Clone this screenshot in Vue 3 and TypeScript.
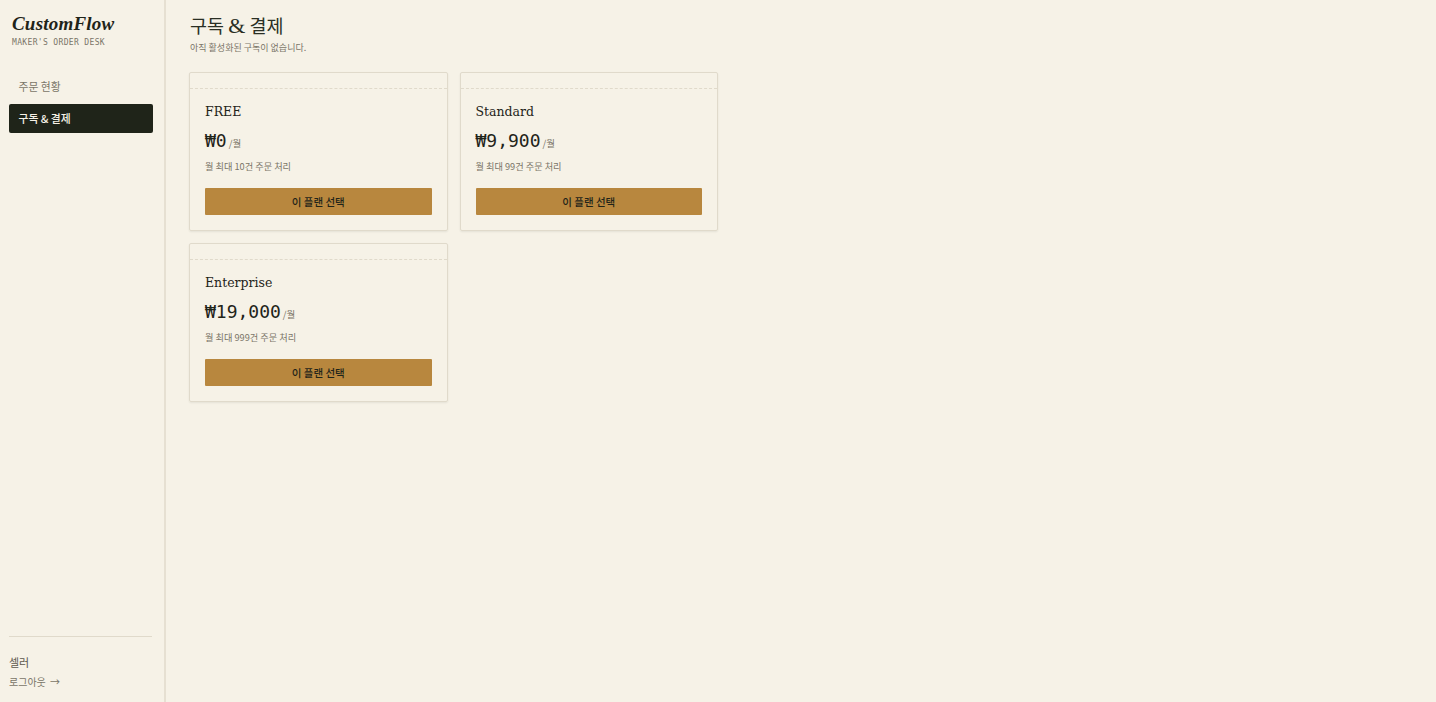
<script setup lang="ts">
const plans = [
  { name: 'FREE', price: '₩0', limit: '월 최대 10건 주문 처리' },
  { name: 'Standard', price: '₩9,900', limit: '월 최대 99건 주문 처리' },
  { name: 'Enterprise', price: '₩19,000', limit: '월 최대 999건 주문 처리' },
]
</script>

<template>
  <div class="layout">
    <aside class="sidebar">
      <div class="brand">
        <div class="brand__name">CustomFlow</div>
        <div class="brand__tag">MAKER'S ORDER DESK</div>
      </div>
      <nav class="nav">
        <a class="nav__item">주문 현황</a>
        <a class="nav__item nav__item--active">구독 &amp; 결제</a>
      </nav>
      <div class="user">
        <div class="user__name">셀러</div>
        <a class="user__logout">로그아웃 <span class="user__arrow">→</span></a>
      </div>
    </aside>
    <main class="main">
      <h1 class="title">구독 <span class="title__amp">&amp;</span> 결제</h1>
      <p class="subtitle">아직 활성화된 구독이 없습니다.</p>
      <div class="plans">
        <section v-for="plan in plans" :key="plan.name" class="plan">
          <h2 class="plan__name">{{ plan.name }}</h2>
          <div class="plan__price">
            <span class="plan__amount">{{ plan.price }}</span>
            <span class="plan__per">/월</span>
          </div>
          <p class="plan__limit">{{ plan.limit }}</p>
          <button class="plan__btn">이 플랜 선택</button>
        </section>
      </div>
    </main>
  </div>
</template>

<style>
body {
  background: #f6f2e7;
}
</style>

<style scoped>
.layout {
  display: flex;
  height: 702px;
  font-family: "Noto Sans CJK KR", "Noto Sans", sans-serif;
  color: #1f2419;
  background: #f6f2e7;
}

.sidebar {
  width: 166px;
  box-sizing: border-box;
  border-right: 2px solid #e6e0d2;
  padding: 0 11px 0 9px;
  display: flex;
  flex-direction: column;
}

.brand {
  padding: 12px 3px 0;
}

.brand__name {
  font-family: "Liberation Serif", serif;
  font-style: italic;
  font-weight: 700;
  font-size: 19px;
  line-height: 23px;
  letter-spacing: 0.2px;
}

.brand__tag {
  font-family: "DejaVu Sans Mono", monospace;
  font-size: 8px;
  line-height: 11px;
  letter-spacing: 0.35px;
  color: #7a7568;
  margin-top: 2px;
}

.nav {
  margin-top: 24px;
  display: flex;
  flex-direction: column;
  gap: 3px;
}

.nav__item {
  height: 29px;
  line-height: 29px;
  padding-left: 9.5px;
  font-size: 10.8px;
  color: #7a7568;
  border-radius: 2px;
}

.nav__item--active {
  background: #1f2419;
  color: #f6f2e7;
  font-weight: 500;
}

.user {
  margin-top: auto;
  margin-right: 1px;
  border-top: 1px solid #e0dacb;
  padding: 17px 0 12px;
}

.user__name {
  font-size: 11px;
  line-height: 16px;
  color: #5c584d;
}

.user__logout {
  display: block;
  margin-top: 4px;
  font-size: 10px;
  line-height: 16px;
  color: #7a7568;
}

.user__arrow {
  margin-left: 2px;
}

.main {
  flex: 1;
  padding: 12px 24px;
}

.title {
  margin: 0;
  font-family: "Noto Sans CJK KR", serif;
  font-weight: 400;
  font-size: 18.5px;
  line-height: 26px;
  color: #2a2f24;
}

.title__amp {
  font-family: "Liberation Serif", serif;
  font-size: 22px;
}

.subtitle {
  margin: 2px 0 0;
  font-size: 9px;
  line-height: 14px;
  color: #7a7568;
}

.plans {
  margin-top: 17px;
  margin-left: -1px;
  display: grid;
  grid-template-columns: repeat(2, 258.5px);
  gap: 12px;
}

.plan {
  position: relative;
  box-sizing: border-box;
  height: 159px;
  padding: 29px 15px 0;
  border: 1px solid #e0dacb;
  border-radius: 2px;
  box-shadow: 0 1px 2px rgba(31, 36, 25, 0.08);
}

.plan::before {
  content: '';
  position: absolute;
  top: 15px;
  left: 0;
  right: 0;
  border-top: 1px dashed #e0dacb;
}

.plan__name {
  margin: 0;
  font-family: "DejaVu Serif", serif;
  font-weight: 400;
  font-size: 12.5px;
  line-height: 19px;
}

.plan__price {
  margin-top: 8px;
  display: flex;
  align-items: baseline;
  gap: 2px;
  height: 24px;
}

.plan__amount {
  font-family: "DejaVu Sans Mono", monospace;
  font-size: 18px;
  line-height: 24px;
}

.plan__per {
  font-size: 9.5px;
  color: #7a7568;
}

.plan__limit {
  margin: 6px 0 0;
  font-size: 9.2px;
  line-height: 14px;
  color: #7a7568;
}

.plan__btn {
  display: block;
  width: 100%;
  height: 27px;
  margin-top: 15px;
  border: none;
  border-radius: 1px;
  background: #b8873e;
  color: #1f2419;
  font-family: inherit;
  font-size: 10.5px;
  font-weight: 500;
  padding: 0;
}
</style>
